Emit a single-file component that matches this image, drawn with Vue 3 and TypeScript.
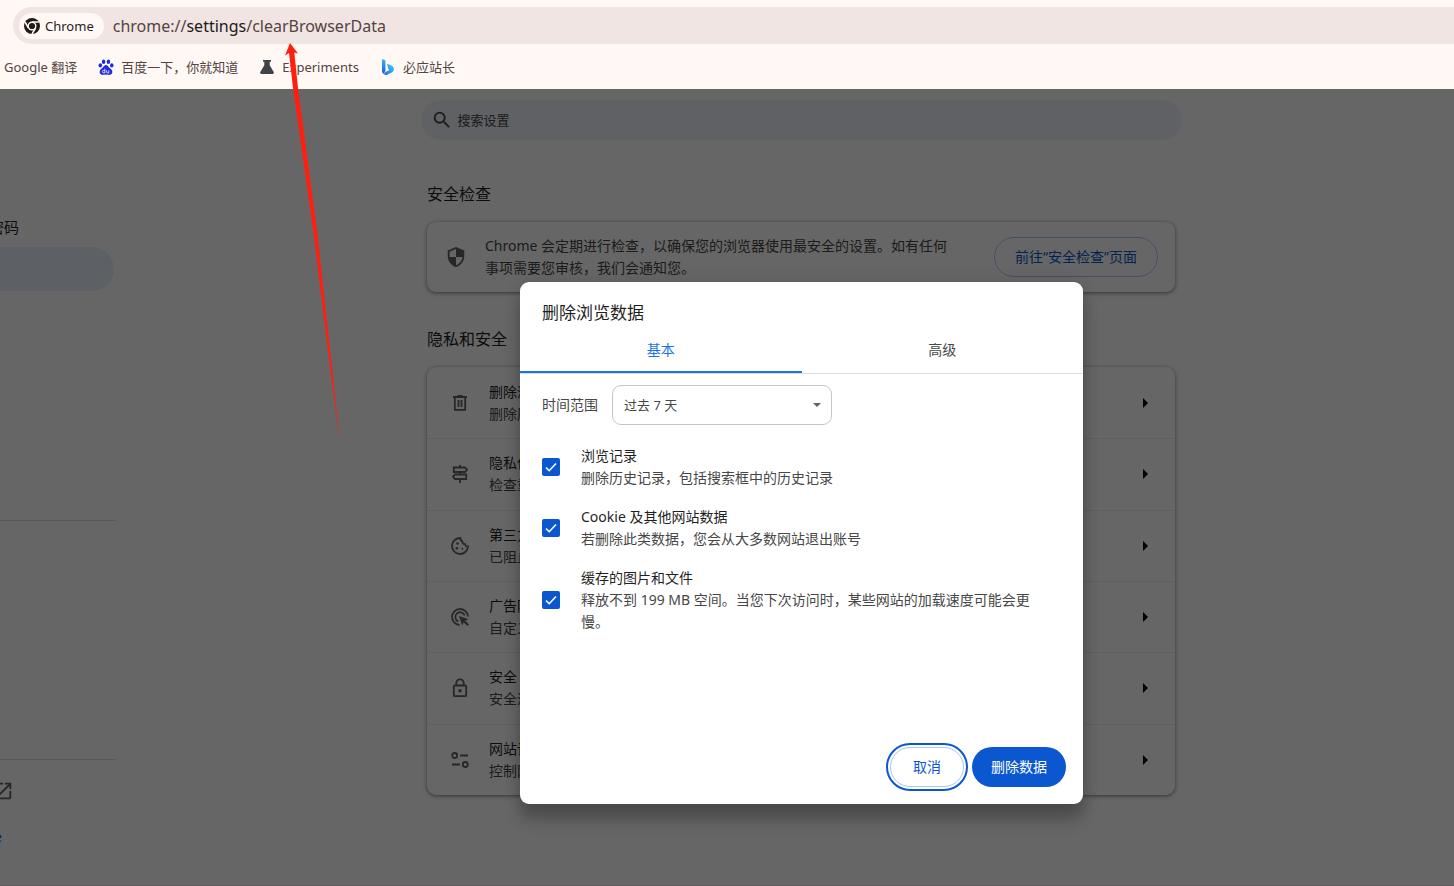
<script setup lang="ts">
import { ref } from 'vue'

interface SettingRow {
  icon: string
  title: string
  detail: string
}

interface ClearOption {
  id: string
  title: string
  detail: string
  checked: boolean
}

const rows: SettingRow[] = [
  { icon: 'trash', title: '删除浏览数据', detail: '删除历史记录、Cookie、缓存及其他数据' },
  { icon: 'guide', title: '隐私保护指南', detail: '检查重要的隐私和安全控件' },
  { icon: 'cookie', title: '第三方 Cookie', detail: '已阻止无痕模式下的第三方 Cookie' },
  { icon: 'ads', title: '广告隐私权设置', detail: '自定义网站用来向您展示广告的信息' },
  { icon: 'lock', title: '安全', detail: '安全浏览（保护您免受危险网站的侵害）和其他安全设置' },
  { icon: 'tune', title: '网站设置', detail: '控制网站可以使用和显示哪些信息' },
]

const options = ref<ClearOption[]>([
  { id: 'history', title: '浏览记录', detail: '删除历史记录，包括搜索框中的历史记录', checked: true },
  { id: 'cookies', title: 'Cookie 及其他网站数据', detail: '若删除此类数据，您会从大多数网站退出账号', checked: true },
  {
    id: 'cache',
    title: '缓存的图片和文件',
    detail: '释放不到 199 MB 空间。当您下次访问时，某些网站的加载速度可能会更慢。',
    checked: true,
  },
])

const range = ref('7d')
const tab = ref<'basic' | 'advanced'>('basic')
const query = ref('')
</script>

<template>
  <div class="browser">
    <header class="toolbar">
      <div class="omnibox">
        <button class="chip" type="button">
          <svg class="chip-icon" viewBox="0 0 16 16" aria-hidden="true">
            <circle cx="8" cy="8" r="8" fill="#1f1a19" />
            <circle cx="8" cy="8" r="4.5" fill="#fff8f5" />
            <path d="M8 3.9H15M4.5 10L1 4M11.6 10L8 16" stroke="#fff8f5" stroke-width="1.5" fill="none" />
            <circle cx="8" cy="8" r="3.1" fill="#1f1a19" />
          </svg>
          <span>Chrome</span>
        </button>
        <span class="url">chrome://<b>settings</b>/clearBrowserData</span>
      </div>
      <nav class="bookmarks">
        <a href="#translate">Google 翻译</a>
        <a href="#baidu">
          <svg viewBox="0 0 16 16" aria-hidden="true">
            <rect width="16" height="16" fill="#fff" />
            <g fill="#2529d8">
              <ellipse cx="5.6" cy="2.7" rx="1.8" ry="2.3" />
              <ellipse cx="10.4" cy="2.7" rx="1.8" ry="2.3" />
              <ellipse cx="2.3" cy="6.4" rx="1.8" ry="2.1" />
              <ellipse cx="13.8" cy="6.4" rx="1.8" ry="2.1" />
              <path d="M8 6c1.7 0 2.2 1.6 3.4 2.800 1.300 1.200 3 2 3 4.100 0 1.800-1.400 2.900-3.100 2.900-1.200 0-2.100-.3-3.300-.3s-2.100.3-3.300.3c-1.700 0-3.100-1.100-3.100-2.900 0-2.100 1.700-2.900 3-4.100C5.800 7.600 6.300 6 8 6z" />
            </g>
            <path d="M6.900 9.700v4.200H5.600a1.200 1.200 0 010-2.500h1.300M8.600 11.300v1.900q0 .7.700.7h1.500v-2.600" stroke="#fff" stroke-width=".8" fill="none" />
          </svg>
          <span>百度一下，你就知道</span>
        </a>
        <a href="#experiments">
          <svg viewBox="0 0 16 16" aria-hidden="true">
            <path d="M4 1h8v1.800h-1.300v3.400L14.700 13q.8 1.800-1 1.900H2.300q-1.800-.1-1-1.900l4-6.800V2.800H4z" fill="#3f4347" />
          </svg>
          <span>Experiments</span>
        </a>
        <a href="#bing">
          <svg viewBox="0 0 16 16" aria-hidden="true">
            <defs>
              <linearGradient id="bing-stem" x1="0" y1="0" x2="0" y2="1">
                <stop offset="0" stop-color="#37b5f3" />
                <stop offset="1" stop-color="#1c55dd" />
              </linearGradient>
              <linearGradient id="bing-bowl" x1="0" y1="1" x2="1" y2="0">
                <stop offset="0" stop-color="#1f6bea" />
                <stop offset="1" stop-color="#41d4f5" />
              </linearGradient>
            </defs>
            <path d="M2 0l2.600 1Q5.400 1.400 5.400 2.300v9.500L3.800 15Q2 14 2 12z" fill="url(#bing-stem)" />
            <path d="M7.300 5.600q-.5-1 .6-.7l3.700 1.700q2.400 1.300 2.400 3.500 0 1.800-1.400 2.900L7.200 15.700q-1.900.8-3.500-.8l1.700-2 3.700-1.600-1-1.700z" fill="url(#bing-bowl)" />
          </svg>
          <span>必应站长</span>
        </a>
      </nav>
    </header>

    <div class="page">
      <aside class="sidebar">
        <a class="side-item side-text" href="#autofill">密码</a>
        <a class="side-item side-active" href="#privacy" aria-label="隐私和安全"></a>
        <hr class="rule rule-first" />
        <hr class="rule rule-second" />
        <a class="side-item side-ext" href="#extensions" aria-label="扩展程序">
          <svg viewBox="0 0 24 24" aria-hidden="true">
            <path d="M19 19H5V5h7V3H5a2 2 0 00-2 2v14a2 2 0 002 2h14c1.100 0 2-.9 2-2v-7h-2v7zM14 3v2h3.590l-9.830 9.830 1.410 1.410L19 6.410V10h2V3h-7z" />
          </svg>
        </a>
        <a class="side-item side-about" href="#about">e</a>
      </aside>

      <main class="main">
        <label class="search">
          <svg viewBox="0 0 24 24" aria-hidden="true">
            <path d="M15.500 14h-.79l-.28-.27A6.471 6.471 0 0016 9.500 6.500 6.500 0 109.500 16c1.610 0 3.090-.59 4.230-1.570l.27.28v.79l5 4.990L20.490 19l-4.990-5zm-6 0C7.010 14 5 11.990 5 9.500S7.010 5 9.500 5 14 7.010 14 9.500 11.990 14 9.500 14z" />
          </svg>
          <input v-model="query" type="text" placeholder="搜索设置" aria-label="搜索设置" />
        </label>

        <div class="column">
          <h2>安全检查</h2>
          <section class="card safety">
            <svg viewBox="0 0 24 24" aria-hidden="true">
              <path d="M12 1L3 5v6c0 5.550 3.840 10.740 9 12 5.160-1.260 9-6.450 9-12V5l-9-4zm0 10.990h7c-.53 4.120-3.280 7.790-7 8.940V12H5V6.300l7-3.110v8.800z" />
            </svg>
            <p>Chrome 会定期进行检查，以确保您的浏览器使用最安全的设置。如有任何事项需要您审核，我们会通知您。</p>
            <button class="pill outline go" type="button">前往“安全检查”页面</button>
          </section>

          <h2>隐私和安全</h2>
          <ul class="card list">
            <li v-for="row in rows" :key="row.title">
              <svg class="row-icon" viewBox="0 0 20 20" aria-hidden="true">
                <g v-if="row.icon === 'trash'">
                  <path d="M3 4H17M7.500 3H12.500" />
                  <path d="M4.800 4V16.800H15.200V4" />
                  <path d="M8.500 7V14M11.500 7V14" />
                </g>
                <g v-else-if="row.icon === 'guide'">
                  <path d="M10 1V3.500M10 8V10.500M10 15V19" />
                  <path d="M3.800 3.500H15L17 5.700L15 8H3.800z" />
                  <path d="M16.200 10.500H5L3 12.700L5 15H16.200z" />
                </g>
                <g v-else-if="row.icon === 'cookie'">
                  <path d="M10.500 2a8 8 0 107.500 8.500q-2.500.3-3-2.300-2.800-.2-2.600-2.900Q10.300 4.600 10.500 2z" />
                  <g class="solid">
                    <circle cx="7.500" cy="7.500" r="1.300" />
                    <circle cx="6.800" cy="12.300" r="1.300" />
                    <circle cx="12.300" cy="12.800" r="1" />
                  </g>
                </g>
                <g v-else-if="row.icon === 'ads'">
                  <path d="M9.500 18A8 8 0 1118 9.500M8.300 14.500A4.800 4.800 0 1114.600 8.300" />
                  <path class="solid" d="M9 9l9.500 3.200-3.300 1.600 3.800 3.800-1.500 1.500-3.800-3.800-1.600 3.300z" />
                </g>
                <g v-else-if="row.icon === 'lock'">
                  <rect x="3.800" y="7.500" width="12.400" height="10.700" rx="1" />
                  <path d="M6.300 7.500V5a3.700 3.700 0 017.400 0V7.500" />
                  <circle class="solid" cx="10" cy="12.800" r="1.700" />
                </g>
                <g v-else>
                  <circle cx="4.700" cy="5.500" r="2.500" />
                  <circle cx="15.300" cy="14.500" r="2.500" />
                  <path d="M10 5.500H18M2 14.500H10" />
                </g>
              </svg>
              <div class="texts">
                <div class="title">{{ row.title }}</div>
                <div class="detail">{{ row.detail }}</div>
              </div>
              <button class="arrow" type="button" :aria-label="row.title">
                <svg viewBox="0 0 5 10" aria-hidden="true"><path d="M0 0L5 5L0 10z" /></svg>
              </button>
            </li>
          </ul>
        </div>
      </main>

      <div class="scrim">
        <form class="dialog" role="dialog" aria-labelledby="dialog-title" @submit.prevent>
          <h1 id="dialog-title">删除浏览数据</h1>
          <div class="tabs" role="tablist">
            <button type="button" role="tab" :class="{ active: tab === 'basic' }" @click="tab = 'basic'">基本</button>
            <button type="button" role="tab" :class="{ active: tab === 'advanced' }" @click="tab = 'advanced'">高级</button>
          </div>
          <div class="range">
            <label for="range">时间范围</label>
            <div class="select">
              <select id="range" v-model="range">
                <option value="7d">过去 7 天</option>
              </select>
              <svg viewBox="0 0 8 4" aria-hidden="true"><path d="M0 0H8L4 4z" /></svg>
            </div>
          </div>
          <div class="options">
            <label v-for="option in options" :key="option.id" class="option" :for="option.id">
              <span class="check">
                <input :id="option.id" v-model="option.checked" type="checkbox" />
                <svg viewBox="0 0 18 18" aria-hidden="true"><path d="M4 9.500L7.200 12.700L14 5.500" /></svg>
              </span>
              <span class="texts">
                <span class="title">{{ option.title }}</span>
                <span class="detail">{{ option.detail }}</span>
              </span>
            </label>
          </div>
          <div class="actions">
            <button class="pill outline focused" type="button">取消</button>
            <button class="pill filled" type="submit">删除数据</button>
          </div>
        </form>
      </div>
    </div>

    <svg class="pointer" viewBox="0 0 60 400" aria-hidden="true">
      <defs>
        <linearGradient id="pointer-fade" x1="0" y1="0" x2="0" y2="1">
          <stop offset="0" stop-color="#ff1e10" />
          <stop offset=".85" stop-color="#ff1e10" />
          <stop offset="1" stop-color="#ff1e10" stop-opacity=".4" />
        </linearGradient>
      </defs>
      <path d="M10 3L18 13.500L14.300 12.500L18 48L37 190L59.500 396L58.500 396L33 190L13 48L9 13L5 15.500z" fill="url(#pointer-fade)" />
    </svg>
  </div>
</template>

<style>
body {
  margin: 0;
}
</style>

<style scoped>
.browser {
  position: relative;
  display: flex;
  flex-direction: column;
  min-height: 100vh;
  overflow: hidden;
  box-sizing: border-box;
  font-family: "Noto Sans", "Noto Sans CJK SC", sans-serif;
  font-size: 14px;
  line-height: 22px;
  color: #1f1f1f;
}

.browser *,
.browser *::before {
  box-sizing: border-box;
}

button,
input,
select {
  font: inherit;
  color: inherit;
}

button {
  border: 0;
  padding: 0;
  background: none;
  white-space: nowrap;
}

a {
  color: inherit;
  text-decoration: none;
}

.toolbar {
  height: 89px;
  padding-top: 7px;
  background: #fff8f5;
}

.omnibox {
  display: flex;
  align-items: center;
  gap: 9px;
  height: 37px;
  margin-left: 13px;
  padding-left: 6px;
  border-radius: 19px 0 0 19px;
  background: #f1e5e3;
}

.chip {
  display: flex;
  align-items: center;
  gap: 5px;
  height: 26px;
  padding: 0 10px 0 5px;
  border-radius: 13px;
  background: #fff8f5;
  font-size: 13px;
}

.chip-icon {
  width: 16px;
  height: 16px;
}

.url {
  font-size: 16px;
  color: #534341;
}

.url b {
  font-weight: 400;
  color: #201a19;
}

.bookmarks {
  display: flex;
  align-items: center;
  gap: 21px;
  height: 46px;
  padding-left: 4px;
  font-size: 13px;
  color: #534341;
}

.bookmarks a {
  display: flex;
  align-items: center;
  gap: 7px;
  white-space: nowrap;
}

.bookmarks svg {
  width: 16px;
  height: 16px;
}

.page {
  position: relative;
  display: grid;
  grid-template-columns: 148px 1fr;
  flex: 1;
  border-bottom: 1px solid #f1e5e3;
}

.sidebar {
  width: 116px;
  padding-top: 118px;
  overflow: hidden;
}

.side-item {
  display: flex;
  align-items: center;
  height: 44px;
}

.side-text {
  height: 40px;
  margin-left: -11px;
  font-size: 15px;
}

.side-active {
  width: 114px;
  border-radius: 0 22px 22px 0;
  background: #e8effd;
}

.rule {
  height: 1px;
  margin: 0;
  border: 0;
  background: #dadce0;
}

.rule-first {
  margin-top: 229px;
}

.rule-second {
  margin-top: 238px;
}

.side-ext {
  margin: 9px 0 2px -8px;
}

.side-ext svg {
  width: 22px;
  height: 22px;
  fill: #5f6368;
}

.side-about {
  margin-left: -6px;
  color: #0b57d0;
}

.main {
  display: flex;
  flex-direction: column;
  align-items: center;
  padding-top: 11px;
}

.search {
  display: flex;
  align-items: center;
  gap: 5px;
  width: 100%;
  max-width: 761px;
  height: 40px;
  padding: 0 10px;
  border-radius: 20px;
  background: #edf2fc;
}

.search svg {
  width: 22px;
  height: 22px;
  fill: #474747;
}

.search input {
  flex: 1;
  border: 0;
  padding: 0;
  outline: none;
  background: none;
  font-size: 13px;
}

.search input::placeholder {
  color: #474747;
  opacity: 1;
}

.column {
  width: 100%;
  max-width: 748px;
  padding-top: 43px;
}

h2 {
  margin: 0 0 17px;
  font-size: 16px;
  font-weight: 400;
  line-height: 22px;
}

.card {
  margin: 0 0 36px;
  border-radius: 9px;
  background: #fff;
  box-shadow: 0 1px 3px rgba(60, 64, 67, 0.4), 0 1px 4px 1px rgba(60, 64, 67, 0.25);
}

.safety {
  display: flex;
  align-items: center;
  min-height: 70px;
  padding: 0 17px 0 18px;
}

.safety svg {
  flex: none;
  width: 22px;
  height: 22px;
  margin-right: 18px;
  fill: #5f6368;
}

.safety p {
  flex: 1;
  max-width: 469px;
  margin: 0 auto 0 0;
  color: #474747;
}

.pill {
  height: 40px;
  padding: 0 18px;
  border: 1px solid transparent;
  border-radius: 20px;
}

.outline {
  border-color: #a8c7fa;
  color: #0b57d0;
}

.go {
  padding: 0 20px;
}

.filled {
  background: #0b57d0;
  color: #fff;
}

.focused {
  padding: 0 22px;
  outline: 2px solid #0b57d0;
  outline-offset: 2px;
}

.list {
  display: grid;
  grid-auto-rows: 1fr;
  min-height: 428px;
  padding: 0;
  list-style: none;
}

.list li {
  display: flex;
  align-items: center;
  padding: 0 27px 0 23px;
}

.list li + li {
  border-top: 1px solid #ebedf0;
}

.row-icon {
  width: 20px;
  height: 20px;
  margin-right: 19px;
  fill: none;
  stroke: #5f6368;
  stroke-width: 1.8;
}

.row-icon .solid {
  fill: #5f6368;
  stroke: none;
}

.texts {
  flex: 1;
}

.title,
.detail {
  display: block;
}

.detail {
  color: #474747;
}

.arrow {
  display: flex;
}

.arrow svg {
  width: 5px;
  height: 10px;
}

.scrim {
  position: absolute;
  inset: 0 0 -1px;
  display: flex;
  justify-content: center;
  align-items: flex-start;
  padding: 193px 0 0 149px;
  background: rgba(0, 0, 0, 0.6);
}

.dialog {
  display: flex;
  flex-direction: column;
  width: 563px;
  min-height: 522px;
  border-radius: 9px;
  background: #fff;
  box-shadow: 0 0 16px rgba(0, 0, 0, 0.12), 0 16px 16px rgba(0, 0, 0, 0.24);
}

h1 {
  margin: 0;
  padding: 20px 22px 5px;
  font-size: 17px;
  font-weight: 400;
  line-height: 22px;
}

.tabs {
  display: flex;
  border-bottom: 1px solid #dadce0;
}

.tabs button {
  flex: 1;
  height: 44px;
  border-bottom: 2px solid transparent;
  color: #474747;
}

.tabs .active {
  border-color: #1a73e8;
  color: #1a73e8;
}

.range {
  display: flex;
  align-items: center;
  gap: 14px;
  padding: 11px 22px 0;
  color: #474747;
}

.select {
  position: relative;
  width: 220px;
}

.select select {
  display: block;
  width: 100%;
  height: 40px;
  padding: 0 11px;
  border: 1px solid #c4c7c5;
  border-radius: 9px;
  appearance: none;
  background: #fff;
  font-size: 13px;
}

.select svg {
  position: absolute;
  top: 18px;
  right: 11px;
  width: 8px;
  height: 4px;
  fill: #5f6368;
  pointer-events: none;
}

.options {
  display: flex;
  flex-direction: column;
  gap: 17px;
  padding: 20px 44px 0 22px;
}

.option {
  display: flex;
  align-items: center;
  gap: 21px;
}

.check {
  position: relative;
  width: 18px;
  height: 18px;
}

.check input {
  display: block;
  width: 18px;
  height: 18px;
  margin: 0;
  border: 2px solid #474747;
  border-radius: 2px;
  appearance: none;
}

.check input:checked {
  border: 0;
  background: #0b57d0;
}

.check svg {
  position: absolute;
  inset: 0;
  fill: none;
  stroke: #fff;
  stroke-width: 1.6;
  pointer-events: none;
}

.actions {
  display: flex;
  justify-content: flex-end;
  gap: 8px;
  margin-top: auto;
  padding: 17px;
}

.pointer {
  position: absolute;
  top: 40px;
  left: 280px;
  width: 60px;
  height: 400px;
  pointer-events: none;
}
</style>
